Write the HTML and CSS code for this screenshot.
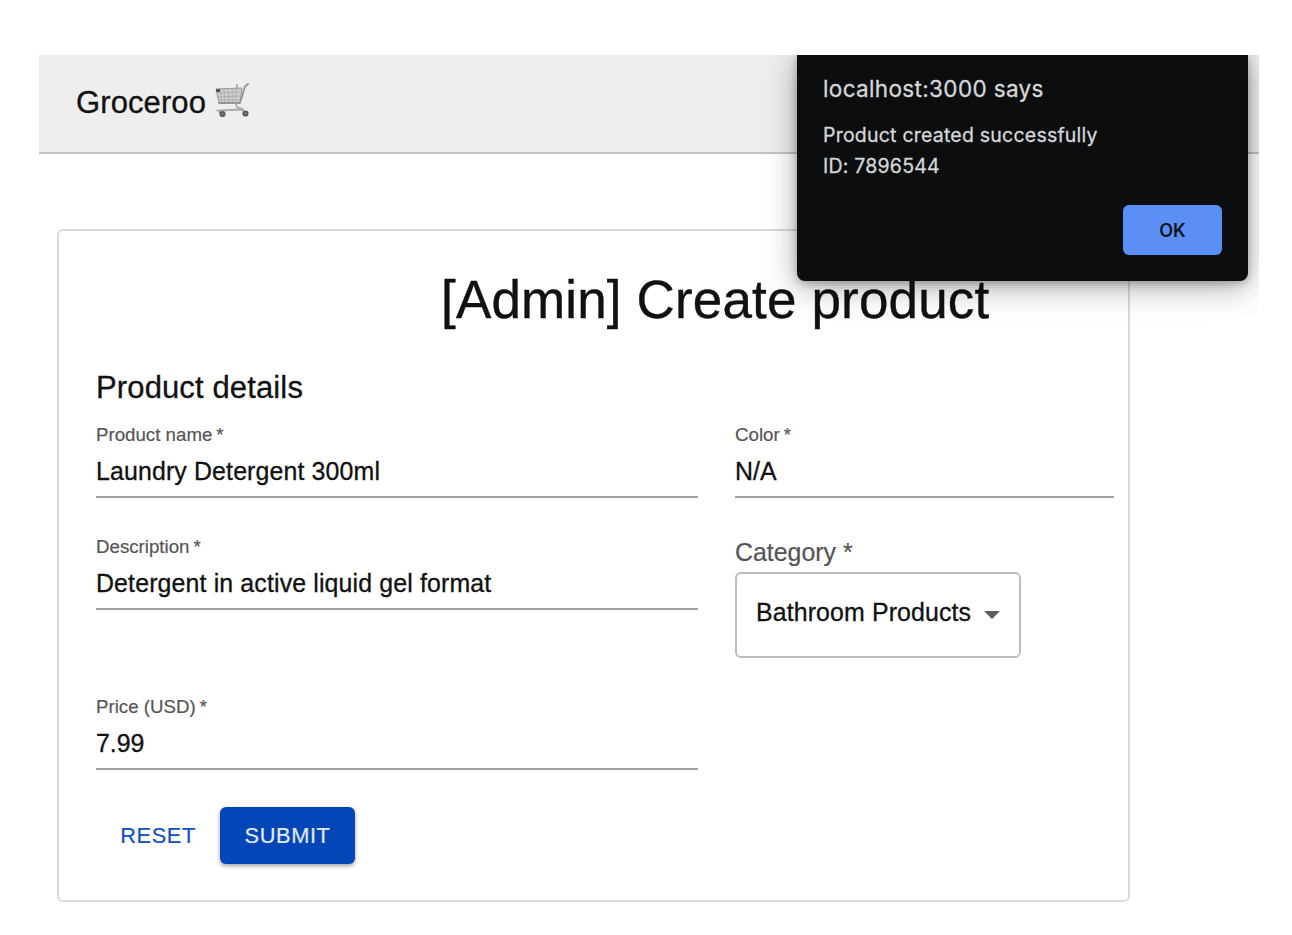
FILE: index.html
```html
<!DOCTYPE html>
<html lang="en">
<head>
<meta charset="utf-8">
<title>Groceroo</title>
<link rel="stylesheet" href="styles.css">
</head>
<body>
<div class="window">
  <header class="topbar">
    <span class="brand">Groceroo</span>
    <svg class="cart" viewBox="0 0 36 36" fill="none">
      <path d="M2 7 L28 6 L26 21 L5 21 Z" fill="#cfcfcf" stroke="#9a9a9a" stroke-width="1"/>
      <path d="M6 7 L8 21 M10 7 L11 21 M14 7 L15 21 M18 7 L18.500 21 M22 7 L22 21 M3 11 L27 10 M3.500 15 L27 14 M4 18 L26 18" stroke="#aaa" stroke-width=".8"/>
      <path d="M34 2 L31 4.500 L26 21 L5 21" stroke="#949494" stroke-width="1.800" stroke-linecap="round" stroke-linejoin="round"/>
      <path d="M22 22 L23 25 L28 27 L31 31 M29 27.500 L4 28.500 L7 31 M23 3 V7" stroke="#aaa" stroke-width="1.800" stroke-linecap="round"/>
      <path d="M2 7 H6 V10 H2 Z" fill="#555"/>
      <circle cx="8.500" cy="32" r="3.100" fill="#5c5c5c"/><circle cx="8.500" cy="32" r="1" fill="#888"/>
      <circle cx="31.500" cy="31.500" r="3.100" fill="#5c5c5c"/><circle cx="31.500" cy="31.500" r="1" fill="#888"/>
    </svg>
  </header>
  <main class="card">
    <h1 class="title">[Admin] Create product</h1>
    <h2 class="section">Product details</h2>
    <form class="grid">
      <div class="field">
        <label class="label">Product name<span class="star">*</span></label>
        <div class="value">Laundry Detergent 300ml</div>
      </div>
      <div class="field">
        <label class="label">Color<span class="star">*</span></label>
        <div class="value tight">N/A</div>
      </div>
      <div class="field">
        <label class="label">Description<span class="star">*</span></label>
        <div class="value">Detergent in active liquid gel format</div>
      </div>
      <div class="category">
        <label class="category-label">Category *</label>
        <div class="select"><span class="option">Bathroom Products</span><span class="caret"></span></div>
      </div>
      <div class="field">
        <label class="label">Price (USD)<span class="star">*</span></label>
        <div class="value tight">7.99</div>
      </div>
    </form>
    <div class="actions">
      <button class="button reset">RESET</button>
      <button class="button submit">SUBMIT</button>
    </div>
  </main>
  <div class="dialog">
    <div class="dialog-title">localhost:3000 says</div>
    <div class="dialog-text">Product created successfully<br>ID: 7896544</div>
    <button class="ok">OK</button>
  </div>
</div>
</body>
</html>
```
FILE: styles.css
```css
* { box-sizing: border-box; }
body {
  margin: 0;
  padding: 55px 33px 0 39px;
  background: #fff;
  color: #111;
  font-family: "Liberation Sans", Arial, sans-serif;
}
.window { position: relative; height: 880px; overflow: hidden; }
.topbar {
  display: flex;
  align-items: center;
  height: 99px;
  padding: 0 37px 2px;
  background: #eee;
  border-bottom: 2px solid #c4c4c4;
}
.brand { font-size: 31px; line-height: 40px; letter-spacing: .1px; -webkit-text-stroke: .3px; }
.cart { width: 36px; height: 36px; margin-left: 8px; margin-top: -5px; }
.card {
  width: 1073px;
  height: 673px;
  margin: 75px 0 0 18px;
  padding: 36px 15px 35px 37px;
  border: 2px solid #dadada;
  border-radius: 6px;
}
.title {
  margin: 0 0 0 345px;
  font-size: 53px;
  line-height: 66px;
  letter-spacing: .15px;
  font-weight: 400;
  white-space: nowrap;
  -webkit-text-stroke: .4px;
}
.section {
  margin: 34px 0 0;
  font-size: 31px;
  line-height: 42px;
  letter-spacing: .13px;
  font-weight: 400;
  -webkit-text-stroke: .3px;
}
.grid {
  display: grid;
  grid-template-columns: 602px 379px;
  column-gap: 37px;
  grid-template-rows: 112px 160px 75px;
  margin-top: 14px;
}
.field { height: 75px; }
.label { display: block; font-size: 18.7px; line-height: 24px; color: #555; -webkit-text-stroke: .2px; }
.star { margin-left: 4px; }
.value {
  height: 51px;
  padding-top: 10px;
  border-bottom: 2px solid #a0a0a0;
  font-size: 24.9px;
  line-height: 29px;
  letter-spacing: .14px;
  -webkit-text-stroke: .3px;
}
.tight { letter-spacing: 0; }
.category-label {
  display: block;
  height: 37px;
  font-size: 24.9px;
  line-height: 34px;
  color: #555;
  -webkit-text-stroke: .2px;
}
.select {
  display: flex;
  align-items: center;
  width: 286px;
  height: 86px;
  padding: 0 19px 5px;
  border: 2px solid #bdbdbd;
  border-radius: 6px;
  font-size: 24.9px;
  letter-spacing: .12px;
  white-space: nowrap;
  -webkit-text-stroke: .3px;
}
.caret { margin: 5px 0 0 13px; border: 8px solid transparent; border-top-color: #5c5c5c; border-bottom: 0; }
.actions { display: flex; gap: 12px; margin-top: 37px; }
.button {
  height: 57px;
  border: 0;
  border-radius: 6px;
  font: 400 21.8px "Liberation Sans", Arial, sans-serif;
  letter-spacing: .6px;
  -webkit-text-stroke: .2px;
}
.reset { width: 112px; padding: 0 0 0 12px; background: none; color: #1450c0; }
.submit { width: 135px; background: #0445b8; color: #e0eafa; box-shadow: 0 2px 4px rgba(0,0,0,.38); }
.dialog {
  position: absolute;
  top: 0;
  left: 758px;
  width: 451px;
  height: 226px;
  padding: 18px 26px;
  border-radius: 0 0 8px 8px;
  background: #0b0d0e;
  color: #d5d7d8;
  box-shadow: 0 6px 32px rgba(0,0,0,.34), 0 2px 8px rgba(0,0,0,.26);
  font-family: Inter, sans-serif;
}
.dialog-title { font-size: 22.5px; line-height: 32px; letter-spacing: .35px; -webkit-text-stroke: .3px; }
.dialog-text { margin-top: 15px; font-size: 19.5px; line-height: 31px; letter-spacing: .22px; -webkit-text-stroke: .3px; }
.ok {
  display: block;
  width: 99px;
  height: 50px;
  margin: 23px 0 0 auto;
  border: 0;
  border-radius: 6px;
  background: #5b8ff6;
  color: #0d1522;
  font: 600 18px Inter, sans-serif;
}
```
